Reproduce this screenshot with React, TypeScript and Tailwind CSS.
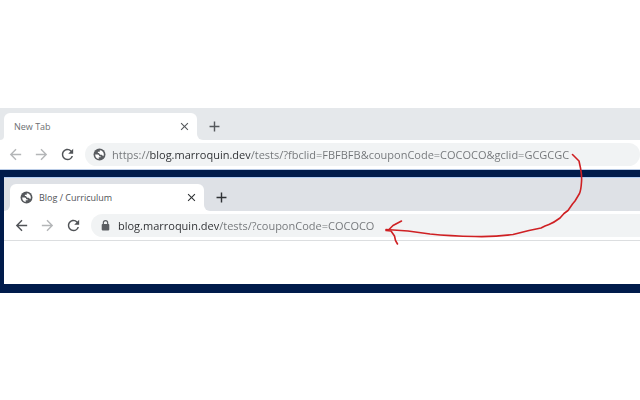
import type { ReactNode } from "react";
import { MdAdd, MdArrowBack, MdArrowForward, MdClose, MdRefresh } from "react-icons/md";

function GlobeIcon({ className }: { className: string }) {
  return (
    <svg className={className} width="13" height="13" viewBox="0 0 24 24" aria-hidden="true">
      <circle cx="12" cy="12" r="11" fill="currentColor" />
      <path
        d="M4 12H9Q11.500 12.500 11.500 15H14V17H10.500V20.500C6.500 20 4 16.500 4 12ZM12.500 4C16.500 4 20 7.500 20 11.500C20 12.500 19.500 14 19 15L16 12.500H13.500L11.500 10.500V9H9V7H12.500Z"
        fill="#fff"
      />
    </svg>
  );
}

function LockIcon({ className }: { className: string }) {
  return (
    <svg className={className} width="13" height="13" viewBox="0 0 24 24" aria-hidden="true">
      <rect x="5" y="9" width="14" height="12" rx="1.500" fill="currentColor" />
      <path d="M8 10V7a4 4 0 0 1 8 0v3" fill="none" stroke="currentColor" strokeWidth="2.200" />
    </svg>
  );
}

type TabStripProps = {
  title: string;
  icon?: ReactNode;
  stripClass: string;
  edgeClass: string;
  tabClass: string;
  titleClass: string;
  iconClass: string;
};

function TabStrip({ title, icon, stripClass, edgeClass, tabClass, titleClass, iconClass }: TabStripProps) {
  return (
    <div className="flex bg-white">
      <div className={`shrink-0 rounded-br-md ${edgeClass} ${stripClass}`} />
      <div className={`shrink-0 ${tabClass} ${stripClass}`}>
        <div className="flex h-[27px] items-center rounded-t-md bg-white pr-[6px] pl-[10px]">
          {icon}
          <span className={`flex-1 text-[9px] leading-4 ${titleClass}`}>{title}</span>
          <button aria-label="Close tab" className={iconClass}>
            <MdClose size={13} />
          </button>
        </div>
      </div>
      <div className={`flex flex-1 items-center rounded-bl-md pt-[5px] pl-[9px] ${stripClass}`}>
        <button aria-label="New tab" className={iconClass}>
          <MdAdd size={17} />
        </button>
      </div>
    </div>
  );
}

type ToolbarProps = {
  url: string;
  icon: ReactNode;
  backClass: string;
  padClass: string;
  barClass: string;
  inputClass: string;
};

function Toolbar({ url, icon, backClass, padClass, barClass, inputClass }: ToolbarProps) {
  return (
    <div className={`flex h-[29px] items-center bg-white ${padClass}`}>
      <div className="flex shrink-0 gap-[9px]">
        <button aria-label="Back" className={backClass}>
          <MdArrowBack size={17} />
        </button>
        <button aria-label="Forward" className="text-[#b4b6b8]">
          <MdArrowForward size={17} />
        </button>
        <button aria-label="Reload" className="text-[#505357]">
          <MdRefresh size={17} />
        </button>
      </div>
      <div className={`ml-[9px] flex h-[23px] flex-1 items-center bg-[#f1f3f4] pl-2 text-[#5a5d61] ${barClass}`}>
        {icon}
        {/* the host is darker than the rest of the url */}
        <input
          aria-label="Address"
          defaultValue={url}
          spellCheck={false}
          className={`ml-[6px] h-5 min-w-0 flex-1 bg-clip-text text-[11px] text-transparent caret-black outline-none ${inputClass}`}
        />
      </div>
    </div>
  );
}

export default function App() {
  return (
    <main className="min-h-screen overflow-x-hidden bg-white pt-[108px] font-['Open_Sans','Noto_Sans',sans-serif]">
      <div className="relative">
        {/* original url */}
        <section>
          <TabStrip
            title="New Tab"
            stripClass="bg-[#e5e8eb]"
            edgeClass="w-1"
            tabClass="w-[193px] pt-[5px]"
            titleClass="text-[#6d6f72]"
            iconClass="text-[#55585c]"
          />
          <Toolbar
            url="https://blog.marroquin.dev/tests/?fbclid=FBFBFB&couponCode=COCOCO&gclid=GCGCGC"
            icon={<GlobeIcon className="shrink-0" />}
            backClass="text-[#b4b6b8]"
            padClass="pl-[7px]"
            barClass="rounded-full"
            inputClass="bg-[linear-gradient(90deg,#717477_37px,#2c2e31_37px,#2c2e31_138px,#717477_138px)]"
          />
        </section>

        {/* cleaned url */}
        <section className="border-t border-[#b9cbe6] bg-[#001b4b] pt-[7px] pb-[9px] pl-1">
          <div className="border-t border-[#b3cdf3]">
            <TabStrip
              title="Blog / Curriculum"
              icon={<GlobeIcon className="mr-[6px] shrink-0 text-[#55585c]" />}
              stripClass="bg-[#dee1e6]"
              edgeClass="w-[6px]"
              tabClass="w-[194px] pt-[6px]"
              titleClass="text-[#505256]"
              iconClass="text-[#2f3235]"
            />
            <Toolbar
              url="blog.marroquin.dev/tests/?couponCode=COCOCO"
              icon={<LockIcon className="shrink-0" />}
              backClass="text-[#505357]"
              padClass="pl-[9px]"
              barClass="rounded-l-full"
              inputClass="bg-[linear-gradient(90deg,#2c2e31_101px,#717477_101px)]"
            />
            <div className="h-11 border-t border-[#dcdee0] bg-white" />
          </div>
        </section>

        {/* hand-drawn arrow */}
        <svg
          className="pointer-events-none absolute top-[42px] left-[380px]"
          width="210"
          height="100"
          viewBox="380 150 210 100"
          fill="none"
          stroke="#cf2023"
          strokeWidth="1.6"
          strokeLinecap="round"
          strokeLinejoin="round"
          aria-hidden="true"
        >
          <path d="M572.500 154.500L575 157L579 161L580.500 168Q582 176 581.500 182Q581 190 579.500 193.500L575 201L572.500 204L568 210.500L564 213.500L560 218Q554 222.500 549 224.500L545 226L541 228L529 230.500L513 234.500Q495 237 475 236.500Q450 236 430 234L408 231L386 229.500" />
          <path d="M401.500 221L393 225.500L389 229.500L386 230.500L391 231L394.500 236L395.500 240.500L397.500 244" />
        </svg>
      </div>
    </main>
  );
}
